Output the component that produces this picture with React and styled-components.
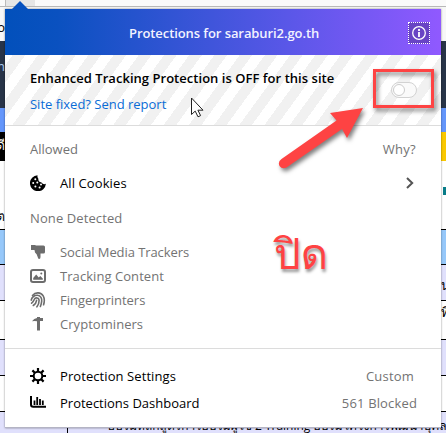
import React from 'react';
import styled, { createGlobalStyle, css } from 'styled-components';

const GlobalStyle = createGlobalStyle`
  body {
    margin: 0;
    overflow: hidden;
    font-family: "Open Sans", "Noto Sans", "Loma", "Garuda", sans-serif;
  }
`

const Screen = styled.div`
  position: relative;
  width: 446px;
  height: 433px;
  overflow: hidden;
  background: #fff;
`

const Page = styled.div`
  display: flex;
  flex-direction: column;
  height: 433px;
`

const Band = styled.div`
  display: flex;
  justify-content: space-between;
  box-sizing: border-box;
  height: ${props => props.$h}px;
  background: ${props => props.$bg || '#fff'};
  border-bottom: ${props => props.$line ? `1px solid ${props.$line}` : 'none'};
  color: ${props => props.$color || '#000'};
  font-size: 13px;
  line-height: 16px;
  white-space: nowrap;
`

const Edge = styled.div`
  width: 5px;
  padding-top: ${props => props.$top || 0}px;
  overflow: hidden;
  direction: ${props => props.$end ? 'rtl' : 'ltr'};
  background: ${props => props.$bg || 'transparent'};
`

const Tab = styled.div`
  box-sizing: border-box;
  width: 30px;
  height: 6px;
  margin-left: 5px;
  background: #e6e6e6;
  border-left: 1px solid #bbb;
`

const Footer = styled.div`
  box-sizing: border-box;
  height: 21px;
  margin-left: 67px;
  padding: 6px 0 0 26px;
  border-left: 1px solid #000;
  font-size: 12px;
`

const Mark = styled.div`
  width: 3px;
  height: 8px;
  margin-left: 2px;
  background: #087c88;
`

const Panel = styled.div`
  position: absolute;
  left: 5px;
  top: 9px;
  box-sizing: border-box;
  width: 436px;
  height: 419px;
  background: #fff;
  border-bottom: 1px solid #b4b4c4;
  box-shadow: 0 0 2px rgba(0, 0, 0, 0.45);
`

const Notch = styled.svg`
  position: absolute;
  left: 6px;
  top: -9px;
`

const Header = styled.div`
  display: flex;
  align-items: center;
  justify-content: space-between;
  box-sizing: border-box;
  height: 46px;
  padding: 1px 11px 0 124px;
  background: linear-gradient(90deg, #0250bb 0%, #0a51c0 12%, #5a57e8 65%, #9059ff 100%);
`

const Text = styled.span`
  font-size: 13px;
  font-weight: ${props => props.$weight || 400};
  letter-spacing: ${props => props.$ls || 0}px;
  color: ${props => props.$color || '#737373'};
  line-height: 20px;
  white-space: nowrap;
`

const InfoButton = styled.div`
  display: flex;
  align-items: center;
  justify-content: center;
  box-sizing: border-box;
  width: 22px;
  height: 22px;
  border: 1px dotted #fff;
  background: #6844c4;
`

const Status = styled.div`
  display: flex;
  justify-content: space-between;
  box-sizing: border-box;
  height: 71px;
  padding: 13px 24px 0 25px;
  border-bottom: 1px solid #dcdcdc;
  background: repeating-linear-gradient(-54deg, #fff 0 10.2px, #f1f1f1 10.2px 20.4px);
`

const Column = styled.div`
  display: flex;
  flex-direction: column;
`

const StatusText = styled(Column)`
  gap: 6px;
`

const Toggle = styled.div`
  box-sizing: border-box;
  width: 26px;
  height: 16px;
  margin-top: 14px;
  border: 1px solid #d2d2d2;
  border-radius: 8px;
  background: #fafafa;
  &::after {
    content: "";
    display: block;
    box-sizing: border-box;
    width: 12px;
    height: 12px;
    margin: 1px;
    border: 1px solid #ccc;
    border-radius: 50%;
    background: #fff;
  }
`

const List = styled(Column)`
  padding: 13px 25px 0;
`

const Row = styled.div`
  display: flex;
  align-items: center;
  justify-content: space-between;
  height: ${props => props.$h || 24}px;
  ${props => props.$right && css`padding-right: ${props.$right}px;`}
`

const Item = styled.div`
  display: flex;
  align-items: center;
  gap: 14px;
`

const Group = styled(Column)`
  padding-top: 11px;
`

const Bottom = styled(Column)`
  margin-top: 12px;
  padding: 13px 24px 0 25px;
  border-top: 1px solid #dcdcdc;
`

const Overlay = styled.svg`
  position: absolute;
  left: 0;
  top: 0;
  pointer-events: none;
`

const ThaiNote = styled.div`
  position: absolute;
  left: 274px;
  top: 228px;
  color: #ff4243;
  font-family: "Loma", "Garuda", "Waree", "Noto Sans Thai Looped", "Tlwg Typo", sans-serif;
  font-size: 42px;
  line-height: 52px;
  text-shadow: 1px 3px 3px rgba(0, 0, 0, 0.4);
`

const Icon = ({ children, color = '#6d6d6d' }) => (
  <svg width="16" height="16" viewBox="0 0 16 16" fill={color} stroke="none">{children}</svg>
)

const Cookie = () => (
  <Icon color="#000">
    <path d="M7.6 0.2A8 8 0 1 0 15.9 8.8 3.6 3.6 0 0 1 11.5 7.5 3.7 3.7 0 0 1 8.3 3.6 3.6 3.6 0 0 1 7.6 0.2z" />
    <g fill="#fff">
      <circle cx="5.3" cy="4.3" r="1" /><circle cx="3.2" cy="8" r="1" /><circle cx="7.3" cy="7.4" r="1" />
      <circle cx="5.4" cy="11.4" r="1" /><circle cx="9.6" cy="12.6" r="1" /><circle cx="11" cy="9.6" r="1" />
    </g>
  </Icon>
)

const ThumbDown = () => (
  <Icon>
    <path d="M1 1h4l1 .5h7.500q1.500 0 1.500 1.500v5q0 1.500-1.500 1.500H10.500v3.500q0 2-1.300 2Q8 15 7.500 12.500 7 10 5 8.500L4.500 6H1z" />
  </Icon>
)

const Picture = () => (
  <Icon>
    <rect x="1" y="2" width="14" height="12" rx="2" fill="none" stroke="#6d6d6d" strokeWidth="2" />
    <path d="M3.200 11.800V10l3-3.400 2.500 3 1.600-1.600 2.500 2.500v1.300z" />
    <circle cx="11.300" cy="5.400" r="1" />
  </Icon>
)

const Fingerprint = () => (
  <Icon color="none">
    <g stroke="#6d6d6d" strokeWidth="1.600" strokeLinecap="round">
      <path d="M2.500 3.400C5.500-.2 11 .2 13.200 3.800c1.500 2.600 1.300 6 .4 9" />
      <path d="M1.200 8.200C1.600 5.200 4.500 3 7.500 3.200c3.300.2 4.500 3.400 4.200 6-.2 2-.6 3.600-1.300 5.200" />
      <path d="M1.600 11.200C3.400 10 3.500 8.700 4.300 7.300 5.200 5.300 9 5.300 9.100 8.400c0 2.500-.9 4.600-2.200 6.400" />
      <path d="M3.300 13.500C5.400 12 6.400 10.300 6.600 8.400" />
    </g>
  </Icon>
)

const Pickaxe = () => (
  <Icon>
    <path d="M2 5.200Q4 2.200 7 2V1h3v1h3v3h-3v9.500H7V5.200Q4.500 4.600 2 5.200z" />
  </Icon>
)

const Gear = () => (
  <Icon color="none">
    <circle cx="8" cy="8" r="4.300" stroke="#000" strokeWidth="2" />
    <path d="M8 0v3.500M8 12.500V16M0 8h3.500M12.500 8H16M2.400 2.400l2.400 2.400M11.200 11.200l2.400 2.400M2.400 13.600l2.400-2.400M11.200 4.800l2.400-2.400" stroke="#000" strokeWidth="2.200" />
  </Icon>
)

const Chart = () => (
  <Icon color="none">
    <path d="M1 1V9.500q0 2.200 2.200 2.200H16" stroke="#000" strokeWidth="2" />
    <path d="M4.500 5.500V10M7.200 2v8M10 4v6M12.800 5.500V10" stroke="#000" strokeWidth="1.800" />
  </Icon>
)

const trackers = [
  { label: 'Social Media Trackers', icon: <ThumbDown />, ls: -0.08 },
  { label: 'Tracking Content', icon: <Picture />, ls: 0.06 },
  { label: 'Fingerprinters', icon: <Fingerprint />, ls: -0.02 },
  { label: 'Cryptominers', icon: <Pickaxe />, ls: 0.05 },
]

const Background = () => (
  <Page>
    <Band $h={7} $line="#b8b8b8" $bg="#fafafa"><Tab /></Band>
    <Band $h={34} $bg="#f7f7f7"><Edge $top={12} $end>o</Edge></Band>
    <Band $h={67} $bg="#283448" $color="#a9c9ee"><Edge $top={17} $end>n</Edge></Band>
    <Band $h={24} $bg="#6496fb" />
    <Band $h={29} $color="#fff">
      <Edge $bg="#000" $top={5} $end>ดี</Edge>
      <Edge $bg="#fac800" />
    </Band>
    <Band $h={69} $line="#000">
      <Edge $top={47} $end>ต</Edge>
      <Edge $top={26}><Mark /></Edge>
    </Band>
    <Band $h={35} $line="#000" $bg="#96c8fa" />
    <Band $h={36} $line="#000" $bg="#e0e0fc"><Edge /><Edge $top={12}>น</Edge></Band>
    <Band $h={39} $line="#000"><Edge /><Edge $top={3}>ที่</Edge></Band>
    <Band $h={36} $line="#000" $bg="#e0e0fc" />
    <Band $h={36} $line="#000" />
    <Band $h={21} $bg="#e0e0fc"><Footer>• &nbsp; อบรมหลักสูตรการอบรมผู้ใช้ 2 Training อบรมโครงการพัฒนาบุคลากรที่</Footer></Band>
  </Page>
)

export default function App() {
  return (
    <Screen>
      <GlobalStyle />
      <Background />
      <Panel>
        <Notch width="18" height="10"><path d="M0 10L9 1l9 9z" fill="#0551bf" /></Notch>
        <Header>
          <Text $weight={600} $ls={-0.08} $color="#f2f2ff">Protections for saraburi2.go.th</Text>
          <InfoButton>
            <svg width="14" height="14" viewBox="0 0 14 14" fill="none" stroke="#fff">
              <circle cx="7" cy="7" r="6.300" strokeWidth="1.300" />
              <path d="M7 3v2M7 6v5" strokeWidth="1.800" />
            </svg>
          </InfoButton>
        </Header>
        <Status>
          <StatusText>
            <Text $weight={600} $ls={0.035} $color="#000">Enhanced Tracking Protection is OFF for this site</Text>
            <Text $ls={-0.01} $color="#0a6cd6">Site fixed? Send report</Text>
          </StatusText>
          <Toggle />
        </Status>
        <List>
          <Row $h={20}>
            <Text>Allowed</Text>
            <Text $ls={0.3}>Why?</Text>
          </Row>
          <Row $h={48} $right={2}>
            <Item><Cookie /><Text $ls={0.1} $color="#000">All Cookies</Text></Item>
            <svg width="8" height="12" fill="none" stroke="#555" strokeWidth="2"><path d="M1 1l5.200 5L1 11" /></svg>
          </Row>
          <Row $h={22}><Text $ls={0.1}>None Detected</Text></Row>
          <Group>
            {trackers.map(t => (
              <Row key={t.label}><Item>{t.icon}<Text $ls={t.ls}>{t.label}</Text></Item></Row>
            ))}
          </Group>
        </List>
        <Bottom>
          <Row $h={27} $right={3}>
            <Item><Gear /><Text $ls={0.08} $color="#000">Protection Settings</Text></Item>
            <Text $ls={0.2}>Custom</Text>
          </Row>
          <Row $h={27}>
            <Item><Chart /><Text $color="#000">Protections Dashboard</Text></Item>
            <Text $ls={0.15}>561 Blocked</Text>
          </Row>
        </Bottom>
      </Panel>
      <Overlay width="446" height="433">
        <g style={{ filter: 'drop-shadow(2px 3px 2px rgba(0,0,0,.5))' }}>
          <rect x="374.500" y="70.500" width="58" height="36" fill="none" stroke="#fe4343" strokeWidth="3" />
          <path d="M281.500 159L336.500 120.500 330 113 363 108 347 138 342 129 286.500 167.500Q282 169.500 279.500 166 277.500 161.500 281.500 159z" fill="#fe4343" />
        </g>
        <path d="M191.500 98v16.500l3.700-3.400 2.800 5.700 2.600-1.200-2.700-5.400h5.100z" fill="#fff" stroke="#222" />
      </Overlay>
      <ThaiNote>ปิด</ThaiNote>
    </Screen>
  );
}
